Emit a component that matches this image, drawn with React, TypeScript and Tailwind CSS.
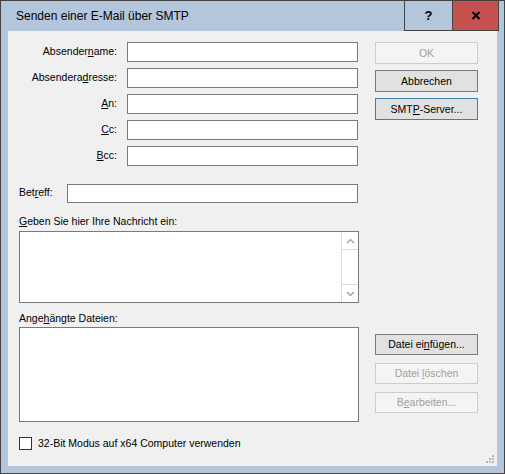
import type { ReactNode } from 'react'

const labelFont = "font-['Liberation_Sans',Arial,sans-serif]"

function Btn({
  children,
  disabled,
  focused,
  className = '',
}: {
  children: ReactNode
  disabled?: boolean
  focused?: boolean
  className?: string
}) {
  let tone = 'bg-[#e1e1e1] border-[#7a7a7a] text-black'
  if (disabled) tone = 'bg-[#f4f4f4] border-[#cccccc] text-[#a0a0a0]'
  if (focused) tone = 'bg-[#e1e1e1] border-[#3c7fb1] text-black'
  return (
    <div className={`w-[103px] border flex items-center justify-center leading-none ${tone} ${className}`}>
      {children}
    </div>
  )
}

function Row({ label }: { label: ReactNode }) {
  return (
    <div className="flex items-center h-[20px]">
      <div className="w-[109px] text-right">{label}</div>
      <div className="ml-[10px] w-[231px] h-[20px] bg-white border border-[#7a7a7a]" />
    </div>
  )
}

function Chevron({ up }: { up?: boolean }) {
  return (
    <svg width="9" height="6" viewBox="0 0 9 6">
      <path
        d={up ? 'M1 5 L4.5 1.5 L8 5' : 'M1 1 L4.5 4.5 L8 1'}
        fill="none"
        stroke="#9a9a9a"
        strokeWidth="1.2"
      />
    </svg>
  )
}

export default function App() {
  return (
    <div className={`w-[505px] h-[474px] bg-[#b4c6dc] border border-[#434343] flex flex-col ${labelFont}`}>
      {/* title bar */}
      <div className="h-[30px] flex shrink-0">
        <div className="flex-1 pl-[15px] flex items-center text-[12px] text-black">
          Senden einer E-Mail über SMTP
        </div>
        <div className="w-[48px] border-l border-b border-[#434343] flex items-center justify-center text-[13px] font-bold">
          ?
        </div>
        <div className="w-[47px] border-l border-r border-b border-[#434343] bg-[#c75050] flex items-center justify-center">
          <svg width="10" height="9" viewBox="0 0 10 9">
            <path d="M1.5 1 L8.5 8 M8.5 1 L1.5 8" stroke="#000" strokeWidth="1.8" />
          </svg>
        </div>
        <div className="w-[5px]" />
      </div>

      {/* client area */}
      <div className="ml-[7px] w-[489px] h-[435px] bg-[#f0f0f0] relative text-[10.5px] text-black flex flex-col">
        <div className="flex pt-[11px]">
          <div className="w-[350px] flex flex-col gap-[6px]">
            <Row label={<>Absender<u>n</u>ame:</>} />
            <Row label={<>Absendera<u>d</u>resse:</>} />
            <Row label={<><u>A</u>n:</>} />
            <Row label={<><u>C</u>c:</>} />
            <Row label={<><u>B</u>cc:</>} />
          </div>
          <div className="ml-[17px] flex flex-col gap-[6px]">
            <Btn disabled className="h-[22px]">OK</Btn>
            <Btn className="h-[22px]">Abbrechen</Btn>
            <Btn focused className="h-[22px]">
              <span>SMT<u>P</u>-Server...</span>
            </Btn>
          </div>
        </div>

        <div className="flex items-center h-[20px] mt-[17px] pl-[11px]">
          <div className="w-[48px]">
            Bet<u>r</u>eff:
          </div>
          <div className="w-[291px] h-[19px] bg-white border border-[#7a7a7a]" />
        </div>

        <div className="mt-[12px] pl-[11px] h-[13px] leading-[13px]">
          <u>G</u>eben Sie hier Ihre Nachricht ein:
        </div>
        <div className="ml-[11px] mt-[3px] w-[340px] h-[72px] bg-white border border-[#7a7a7a] flex justify-end">
          <div className="w-[17px] h-full border-l border-[#dadada] flex flex-col">
            <div className="h-[18px] border-b border-[#dadada] flex items-center justify-center">
              <Chevron up />
            </div>
            <div className="flex-1" />
            <div className="h-[18px] border-t border-[#dadada] flex items-center justify-center">
              <Chevron />
            </div>
          </div>
        </div>

        <div className="mt-[9px] pl-[11px] h-[13px] leading-[13px]">
          Ange<u>h</u>ängte Dateien:
        </div>
        <div className="flex mt-[2px]">
          <div className="ml-[11px] w-[340px] h-[95px] bg-white border border-[#7a7a7a]" />
          <div className="ml-[16px] mt-[7px] flex flex-col gap-[8px]">
            <Btn className="h-[21px]">
              <span>Datei ei<u>n</u>fügen...</span>
            </Btn>
            <Btn disabled className="h-[21px]">
              <span>Datei <u>l</u>öschen</span>
            </Btn>
            <Btn disabled className="h-[21px]">
              <span>B<u>e</u>arbeiten...</span>
            </Btn>
          </div>
        </div>

        <div className="flex items-center mt-[15px] pl-[11px] h-[13px]">
          <div className="w-[13px] h-[13px] bg-white border border-[#333333]" />
          <span className="ml-[6px]">32-Bit Modus auf x64 Computer verwenden</span>
        </div>

        {/* resize grip */}
        <svg className="absolute right-[2px] bottom-[2px]" width="10" height="10" viewBox="0 0 10 10">
          <rect x="7" y="1" width="2" height="2" fill="#b8b8b8" />
          <rect x="4" y="4" width="2" height="2" fill="#b8b8b8" />
          <rect x="7" y="4" width="2" height="2" fill="#b8b8b8" />
          <rect x="1" y="7" width="2" height="2" fill="#b8b8b8" />
          <rect x="4" y="7" width="2" height="2" fill="#b8b8b8" />
          <rect x="7" y="7" width="2" height="2" fill="#b8b8b8" />
        </svg>
      </div>
    </div>
  )
}
